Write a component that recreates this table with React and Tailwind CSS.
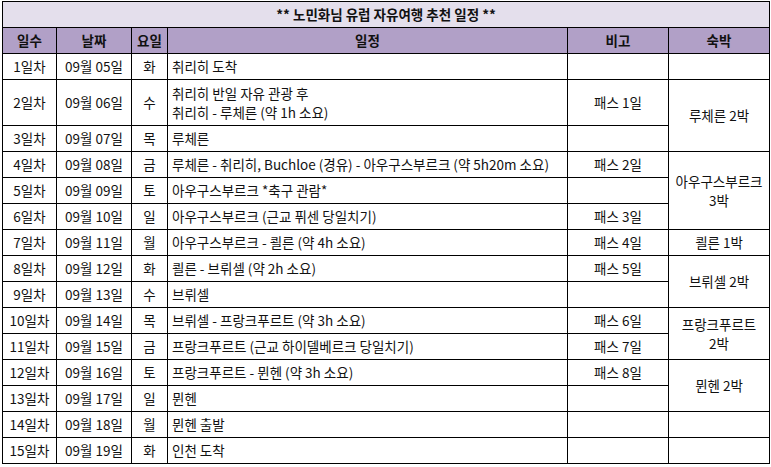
import React from "react";

const rows = [
  { day: "1일차", date: "09월 05일", dow: "화", plan: ["취리히 도착"], note: "", stay: { text: [""], span: 1 } },
  { day: "2일차", date: "09월 06일", dow: "수", plan: ["취리히 반일 자유 관광 후", "취리히 - 루체른 (약 1h 소요)"], note: "패스 1일", stay: { text: ["루체른 2박"], span: 2 }, tall: true },
  { day: "3일차", date: "09월 07일", dow: "목", plan: ["루체른"], note: "" },
  { day: "4일차", date: "09월 08일", dow: "금", plan: ["루체른 - 취리히, Buchloe (경유) - 아우구스부르크 (약 5h20m 소요)"], note: "패스 2일", stay: { text: ["아우구스부르크", "3박"], span: 3 } },
  { day: "5일차", date: "09월 09일", dow: "토", plan: ["아우구스부르크 *축구 관람*"], note: "" },
  { day: "6일차", date: "09월 10일", dow: "일", plan: ["아우구스부르크 (근교 퓌센 당일치기)"], note: "패스 3일" },
  { day: "7일차", date: "09월 11일", dow: "월", plan: ["아우구스부르크 - 쾰른 (약 4h 소요)"], note: "패스 4일", stay: { text: ["쾰른 1박"], span: 1 } },
  { day: "8일차", date: "09월 12일", dow: "화", plan: ["쾰른 - 브뤼셀 (약 2h 소요)"], note: "패스 5일", stay: { text: ["브뤼셀 2박"], span: 2 } },
  { day: "9일차", date: "09월 13일", dow: "수", plan: ["브뤼셀"], note: "" },
  { day: "10일차", date: "09월 14일", dow: "목", plan: ["브뤼셀 - 프랑크푸르트 (약 3h 소요)"], note: "패스 6일", stay: { text: ["프랑크푸르트", "2박"], span: 2 } },
  { day: "11일차", date: "09월 15일", dow: "금", plan: ["프랑크푸르트 (근교 하이델베르크 당일치기)"], note: "패스 7일" },
  { day: "12일차", date: "09월 16일", dow: "토", plan: ["프랑크푸르트 - 뮌헨 (약 3h 소요)"], note: "패스 8일", stay: { text: ["뮌헨 2박"], span: 2 } },
  { day: "13일차", date: "09월 17일", dow: "일", plan: ["뮌헨"], note: "" },
  { day: "14일차", date: "09월 18일", dow: "월", plan: ["뮌헨 출발"], note: "", stay: { text: [""], span: 1 } },
  { day: "15일차", date: "09월 19일", dow: "화", plan: ["인천 도착"], note: "", stay: { text: [""], span: 1 } },
];

const cell = "border border-black p-0 align-middle";

const App = () => {
  return (
    <div
      className="bg-white w-[771px] h-[467px] pl-[2px] pt-[1px] text-[13.5px] text-[#111] leading-[19px]"
      style={{ fontFamily: '"Noto Sans CJK KR", "Noto Sans", sans-serif' }}
    >
      <table className="border-collapse table-fixed w-[767px]">
        <colgroup>
          <col className="w-[54px]" />
          <col className="w-[75px]" />
          <col className="w-[36px]" />
          <col className="w-[400px]" />
          <col className="w-[101px]" />
          <col className="w-[101px]" />
        </colgroup>
        <tbody>
          <tr className="h-[26px] bg-[#e4dfec]">
            <td colSpan={6} className={`${cell} text-center font-bold`}>
              ** 노민화님 유럽 자유여행 추천 일정 **
            </td>
          </tr>
          <tr className="h-[26px] bg-[#b1a0c7] font-bold">
            <td className={`${cell} text-center`}>일수</td>
            <td className={`${cell} text-center`}>날짜</td>
            <td className={`${cell} text-center`}>요일</td>
            <td className={`${cell} text-center`}>일정</td>
            <td className={`${cell} text-center`}>비고</td>
            <td className={`${cell} text-center`}>숙박</td>
          </tr>
          {rows.map((r) => (
            <tr key={r.day} className={r.tall ? "h-[46px]" : "h-[26px]"}>
              <td className={`${cell} text-center`}>{r.day}</td>
              <td className={`${cell} text-center`}>{r.date}</td>
              <td className={`${cell} text-center`}>{r.dow}</td>
              <td className={`${cell} pl-[4px] whitespace-nowrap`}>
                {r.plan.map((p, i) => (
                  <div key={i}>{p}</div>
                ))}
              </td>
              <td className={`${cell} text-center`}>{r.note}</td>
              {r.stay && (
                <td rowSpan={r.stay.span} className={`${cell} text-center`}>
                  {r.stay.text.map((t, i) => (
                    <div key={i}>{t}</div>
                  ))}
                </td>
              )}
            </tr>
          ))}
        </tbody>
      </table>
    </div>
  );
};

export default App;
